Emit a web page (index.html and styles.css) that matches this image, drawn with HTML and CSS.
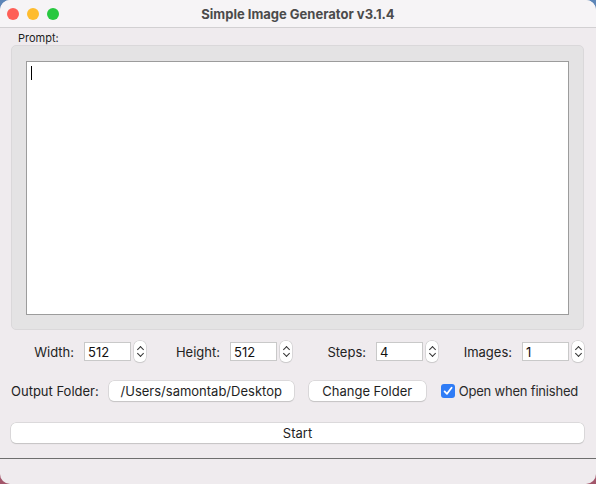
FILE: index.html
```html
<!DOCTYPE html>
<html lang="en">
<head>
  <meta charset="UTF-8" />
  <meta name="viewport" content="width=device-width, initial-scale=1.0" />
  <title>Simple Image Generator v3.1.4</title>
  <link rel="stylesheet" href="styles.css">
</head>
<body>
  <div class="window">
    <header class="titlebar">
      <div class="lights">
        <span class="light red"></span>
        <span class="light yellow"></span>
        <span class="light green"></span>
      </div>
      <h1 class="title">Simple Image Generator v3.1.4</h1>
    </header>

    <main class="content">
      <div class="prompt-label">Prompt:</div>
      <div class="group">
        <div class="prompt-box"><span class="caret"></span></div>
      </div>

      <div class="spin-row">
        <div class="field">
          <label>Width:</label>
          <input class="num" type="text" value="512" />
          <span class="spinner"><span class="up"></span><span class="down"></span></span>
        </div>
        <div class="field">
          <label>Height:</label>
          <input class="num" type="text" value="512" />
          <span class="spinner"><span class="up"></span><span class="down"></span></span>
        </div>
        <div class="field">
          <label>Steps:</label>
          <input class="num" type="text" value="4" />
          <span class="spinner"><span class="up"></span><span class="down"></span></span>
        </div>
        <div class="field">
          <label>Images:</label>
          <input class="num" type="text" value="1" />
          <span class="spinner"><span class="up"></span><span class="down"></span></span>
        </div>
      </div>

      <div class="folder-row">
        <span class="folder-label">Output Folder:</span>
        <button class="btn path">/Users/samontab/Desktop</button>
        <button class="btn change">Change Folder</button>
        <label class="check">
          <span class="box">
            <svg width="10" height="10" viewBox="0 0 10 10"><path d="M1.6 5.4 L4 7.8 L8.6 1.8" fill="none" stroke="white" stroke-width="1.8" stroke-linecap="round" stroke-linejoin="round"/></svg>
          </span>
          Open when finished
        </label>
      </div>

      <button class="btn start">Start</button>
    </main>

    <div class="status"></div>
  </div>
</body>
</html>
```

FILE: styles.css
```css
html, body {
  margin: 0;
  padding: 0;
}
body {
  width: 596px;
  height: 484px;
  overflow: hidden;
  background: linear-gradient(#5d86b8, #a3566a);
  font-family: Inter, "Noto Sans", sans-serif;
  font-size: 13px;
  color: #222;
}
.window {
  height: 484px;
  background: #efebee;
  border-radius: 10px;
  overflow: hidden;
  display: flex;
  flex-direction: column;
}
.titlebar {
  height: 28px;
  background: #f6f4f6;
  border-bottom: 1px solid #d2d0d2;
  box-sizing: border-box;
  display: flex;
  align-items: center;
  position: relative;
}
.lights {
  display: flex;
  gap: 8px;
  padding-left: 7px;
}
.light {
  width: 12px;
  height: 12px;
  border-radius: 50%;
}
.red { background: #fe5f57; }
.yellow { background: #febc2e; }
.green { background: #28c840; }
.title {
  position: absolute;
  left: 0;
  right: 0;
  margin: 0;
  text-align: center;
  font-size: 13px;
  font-weight: 700;
  color: #4b4b4b;
}
.content {
  padding: 4px 12px 0 11px;
}
.prompt-label {
  font-size: 11px;
  padding-left: 7px;
  height: 13px;
  line-height: 13px;
  color: #1e1e1e;
}
.group {
  height: 285px;
  box-sizing: border-box;
  background: #e4e3e4;
  border: 1px solid #dad8da;
  border-radius: 5px;
  padding: 15px 14px 14px 14px;
}
.prompt-box {
  height: 100%;
  box-sizing: border-box;
  background: #fff;
  border: 1px solid #9c9c9c;
  padding: 4px 4px;
}
.caret {
  display: block;
  width: 1px;
  height: 14px;
  background: #000;
}
.spin-row {
  display: grid;
  grid-template-columns: repeat(4, 1fr);
  column-gap: 11px;
  margin-top: 11px;
}
.field {
  display: flex;
  justify-content: flex-end;
  align-items: center;
}
.field label {
  margin-right: 10px;
}
.num {
  width: 47px;
  height: 19px;
  box-sizing: border-box;
  border: 1px solid #c9c9c9;
  background: #fff;
  font: inherit;
  padding: 0 3px;
  color: #111;
  outline: none;
}
.spinner {
  width: 12px;
  height: 21px;
  margin-left: 3px;
  background: #fff;
  border-radius: 5px;
  box-shadow: 0 0 0 0.5px #c4c4c4, 0 1px 1px rgba(0, 0, 0, 0.1);
  display: flex;
  flex-direction: column;
  align-items: center;
  justify-content: center;
  gap: 3px;
}
.spinner span {
  width: 4px;
  height: 4px;
  border-left: 1.5px solid #333;
  border-top: 1.5px solid #333;
}
.spinner .up {
  transform: translateY(2px) rotate(45deg);
}
.spinner .down {
  transform: translateY(-2px) rotate(225deg);
}
.folder-row {
  display: flex;
  align-items: center;
  margin-top: 19px;
}
.folder-label {
  margin-right: 10px;
}
.btn {
  font: inherit;
  color: #1e1e1e;
  background: #fff;
  border: none;
  border-radius: 5px;
  box-shadow: 0 0 0 0.5px #c8c8c8, 0 1px 1px rgba(0, 0, 0, 0.18);
  height: 20px;
  padding: 0;
}
.path {
  width: 185px;
}
.change {
  width: 117px;
  margin-left: 15px;
}
.check {
  display: flex;
  align-items: center;
  margin-left: 15px;
  color: #2a2a2a;
  letter-spacing: -0.2px;
}
.box {
  width: 14px;
  height: 14px;
  border-radius: 3px;
  background: #2f7cf6;
  display: flex;
  align-items: center;
  justify-content: center;
  margin-right: 4px;
}
.start {
  display: block;
  width: 573px;
  margin-top: 22px;
}
.status {
  margin-top: 15px;
  border-top: 1px solid #6e6e6e;
}
```
